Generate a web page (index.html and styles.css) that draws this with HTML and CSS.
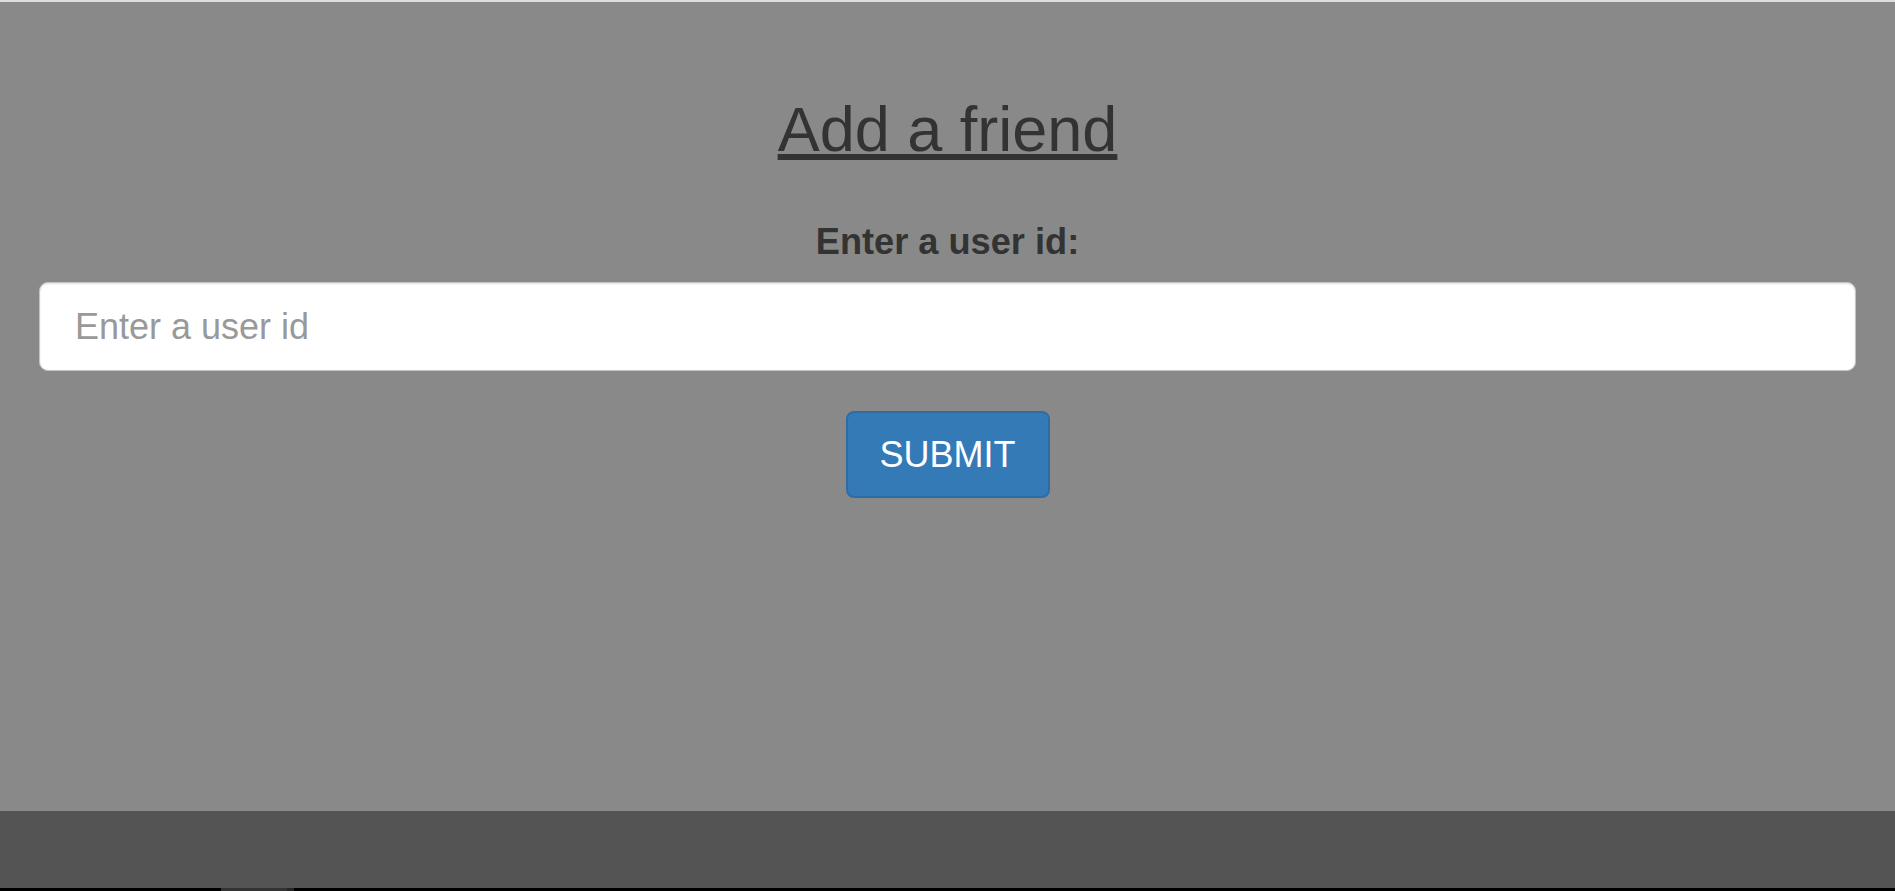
FILE: index.html
```html
<!DOCTYPE html>
<html lang="en">
<head>
<meta charset="utf-8">
<title>Add a friend</title>
<link rel="stylesheet" href="styles.css">
</head>
<body>
<div class="page">
  <div class="topline"></div>
  <main class="content">
    <h1 class="title">Add a friend</h1>
    <form class="form" onsubmit="return false;">
      <label class="label" for="uid">Enter a user id:</label>
      <input id="uid" class="field" type="text" placeholder="Enter a user id">
      <button class="btn" type="submit">SUBMIT</button>
    </form>
  </main>
  <footer class="bottombar"></footer>
  <div class="taskstrip"><span class="seg-a"></span><span class="seg-b"></span></div>
</div>
</body>
</html>
```
FILE: styles.css
```css
html, body {
  margin: 0;
  padding: 0;
  height: 100%;
}
body {
  font-family: "Liberation Sans", Arial, sans-serif;
  color: #333;
  background: #000;
}
.page {
  height: 891px;
  display: flex;
  flex-direction: column;
}
.topline {
  height: 2px;
  background: #dedede;
  flex: none;
}
.content {
  flex: 1;
  background: #898989;
  padding: 0 39px;
  display: flex;
  flex-direction: column;
  align-items: center;
}
.title {
  margin: 91px 0 0;
  font-size: 63px;
  line-height: 72px;
  font-weight: 400;
  color: #333;
  text-decoration: underline;
  text-decoration-thickness: 6px;
  text-underline-offset: 3px;
}
.form {
  align-self: stretch;
  display: flex;
  flex-direction: column;
  align-items: center;
  margin-top: 56px;
}
.label {
  font-size: 36.2px;
  line-height: 41px;
  font-weight: 700;
  color: #333;
}
.field {
  align-self: stretch;
  box-sizing: border-box;
  margin-top: 20px;
  height: 89px;
  border: 1px solid #c4c4c4;
  border-radius: 9px;
  background: #fff;
  padding: 0 35px;
  font-family: "Liberation Sans", Arial, sans-serif;
  font-size: 36px;
  color: #555;
  box-shadow: inset 0 1px 2px rgba(0, 0, 0, 0.12);
  outline: none;
}
.field::placeholder {
  color: #999;
}
.btn {
  margin-top: 40px;
  box-sizing: border-box;
  width: 204px;
  height: 87px;
  background: #337ab7;
  border: 2px solid #2e6da4;
  border-radius: 8px;
  color: #fff;
  font-family: "Liberation Sans", Arial, sans-serif;
  font-size: 36px;
  padding: 0;
  cursor: pointer;
}
.bottombar {
  height: 77px;
  background: #545454;
  flex: none;
}
.taskstrip {
  height: 3px;
  background: #000;
  flex: none;
  display: flex;
  padding-left: 221px;
}
.seg-a {
  width: 66px;
  background: #333;
}
.seg-b {
  width: 7px;
  background: #262626;
}
```
